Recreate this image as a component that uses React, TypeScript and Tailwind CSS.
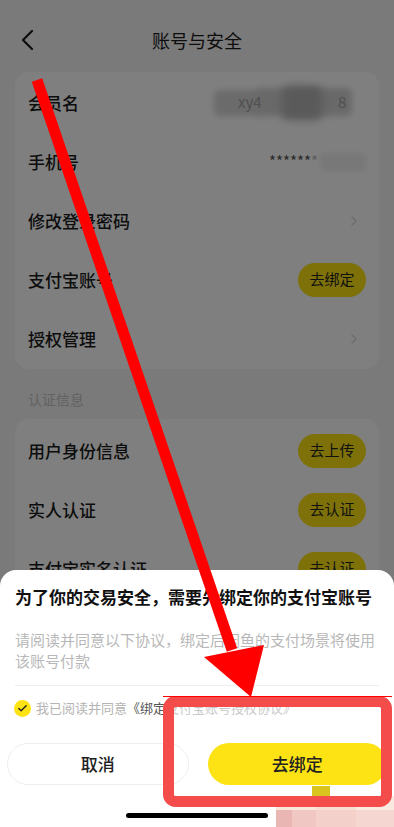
import React from "react";
import { ChevronRight, Check } from "lucide-react";

const font = { fontFamily: '"Noto Sans CJK SC", "Noto Sans", sans-serif' };

type Row = { label: string; action?: string; chevron?: boolean; value?: React.ReactNode };

const PillButton = ({ text }: { text: string }) => (
    <span className="flex h-[34px] w-[68px] items-center justify-center rounded-full bg-[#fde314] text-[15px] text-[#222]">
        {text}
    </span>
);

const RowItem = ({ row }: { row: Row }) => (
    <div className="flex h-[59px] items-center justify-between pl-[13px] pr-[13px]">
        <span className="text-[17px] font-medium text-[#1a1a1a]">{row.label}</span>
        {row.action && <PillButton text={row.action} />}
        {row.chevron && <ChevronRight className="mr-[4px] h-[16px] w-[16px] text-[#d6d6d6]" strokeWidth={2} />}
        {row.value}
    </div>
);

const BlurredName = () => (
    <div className="relative mr-[14px] h-[40px] w-[138px]">
        <div className="absolute left-0 top-[7px] h-[26px] w-[50px] rounded-md bg-[#d6d6d6] blur-[3px]" />
        <div className="absolute left-[42px] top-[5px] h-[28px] w-[96px] rounded-md bg-[#d2d2d2] blur-[3px]" />
        <div className="absolute left-[68px] top-[3px] h-[34px] w-[40px] rounded-md bg-[#b4b4b4] blur-[4px]" />
        <span className="absolute left-[24px] top-[8px] text-[15px] text-[#a0a0a0]">xy4</span>
        <span className="absolute left-[124px] top-[8px] text-[15px] text-[#a0a0a0]">8</span>
    </div>
);

const PhoneValue = () => (
    <div className="flex items-center text-[15px]">
        <span className="text-[#555]">******</span>
        <span className="text-[#bbb]">*</span>
        <span className="ml-[2px] h-[18px] w-[46px] rounded-sm bg-[#f1f1f1] blur-[2px]" />
    </div>
);

const accountRows: Row[] = [
    { label: "会员名", value: <BlurredName /> },
    { label: "手机号", value: <PhoneValue /> },
    { label: "修改登录密码", chevron: true },
    { label: "支付宝账号", action: "去绑定" },
    { label: "授权管理", chevron: true },
];

const authRows: Row[] = [
    { label: "用户身份信息", action: "去上传" },
    { label: "实人认证", action: "去认证" },
    { label: "支付宝实名认证", action: "去认证" },
];

export default function App() {
    return (
        <div className="relative h-[827px] w-[394px] overflow-hidden bg-[#f4f4f4]" style={font}>
            {/* page */}
            <div className="flex h-[64px] items-center px-[20px] pt-[16px]">
                <svg width="14" height="20" viewBox="0 0 14 20" className="shrink-0">
                    <polyline points="12,1 3,10 12,19" fill="none" stroke="#1a1a1a" strokeWidth="2.2" strokeLinecap="round" strokeLinejoin="round" />
                </svg>
                <div className="flex-1 pr-[14px] text-center text-[18px] text-[#1a1a1a]">账号与安全</div>
            </div>
            <div className="mx-[15px] mt-[8px] flex flex-col rounded-[14px] bg-white py-[1px]">
                {accountRows.map(r => <RowItem key={r.label} row={r} />)}
            </div>
            <div className="h-[50px] pl-[28px] pt-[21px] text-[14px] leading-[18px] text-[#c4c4c4]">认证信息</div>
            <div className="mx-[15px] flex flex-col rounded-[14px] bg-white pt-[2px]">
                {authRows.map(r => <RowItem key={r.label} row={r} />)}
            </div>

            {/* dim */}
            <div className="absolute inset-0 bg-black/50" />

            {/* bottom sheet */}
            <div className="absolute inset-x-0 bottom-0 top-[570px] rounded-t-[16px] bg-white px-[15px] pt-[15px]">
                <div className="text-[17px] font-semibold leading-[24px] text-[#111]">为了你的交易安全，需要先绑定你的支付宝账号</div>
                <div className="mt-[20px] text-[15px] leading-[21px] text-[#b8b8b8]">
                    请阅读并同意以下协议，绑定后闲鱼的支付场景将使用该账号付款
                </div>
                <div className="mt-[14px] h-px bg-[#eeeeee]" />
                <div className="mt-[12px] flex h-[20px] items-center">
                    <span className="ml-[-1px] flex h-[17px] w-[17px] items-center justify-center rounded-full bg-[#fde314]">
                        <Check className="h-[11px] w-[11px] text-[#222]" strokeWidth={3} />
                    </span>
                    <span className="ml-[5px] text-[13px] text-[#b4b4b4]">我已阅读并同意</span>
                    <span className="text-[13px] text-[#555]">《绑定</span>
                    <span className="text-[13px] text-[#c9c9c9]">支付宝账号授权协议》</span>
                </div>
                <div className="mx-[-8px] mt-[25px] flex gap-[19px]">
                    <button className="flex h-[42px] flex-1 items-center justify-center rounded-full border border-[#eeeeee] text-[17px] font-medium text-[#222]">取消</button>
                    <button className="flex h-[42px] flex-1 items-center justify-center rounded-full bg-[#fde314] text-[17px] font-medium text-[#222]">去绑定</button>
                </div>
                <div className="mx-auto mt-[28px] h-[5px] w-[142px] rounded-full bg-black" />
            </div>

            {/* watermark mosaic */}
            <div className="absolute left-[276px] top-[796px] flex">
                <div className="h-[14px] w-[40px] bg-[#f8e6da]" />
                <div className="h-[14px] w-[40px] bg-[#f7ddd2]" />
                <div className="h-[14px] w-[38px] bg-[#f9e9e0]" />
            </div>
            <div className="absolute left-[276px] top-[810px] flex">
                <div className="h-[17px] w-[16px] bg-[#eab6b3]" />
                <div className="h-[17px] w-[24px] bg-[#f1c7c3]" />
                <div className="h-[17px] w-[40px] bg-[#f4d0cb]" />
                <div className="h-[17px] w-[38px] bg-[#f6d6d0]" />
            </div>
            <div className="absolute left-[312px] top-[786px] h-[10px] w-[18px] bg-[#d8c41c]" />

            {/* annotation */}
            <svg className="absolute inset-0" width="394" height="827" viewBox="0 0 394 827">
                <line x1="37" y1="80" x2="232" y2="650" stroke="#ff0000" strokeWidth="11" />
                <polygon points="204,657 264,645 251,697" fill="#ff0000" />
                <rect x="168.5" y="701.5" width="218" height="100" rx="7" fill="none" stroke="#f44b4b" strokeWidth="11" />
                <line x1="163" y1="696.5" x2="392" y2="696.5" stroke="#ff0000" strokeWidth="1" />
            </svg>
        </div>
    );
}
